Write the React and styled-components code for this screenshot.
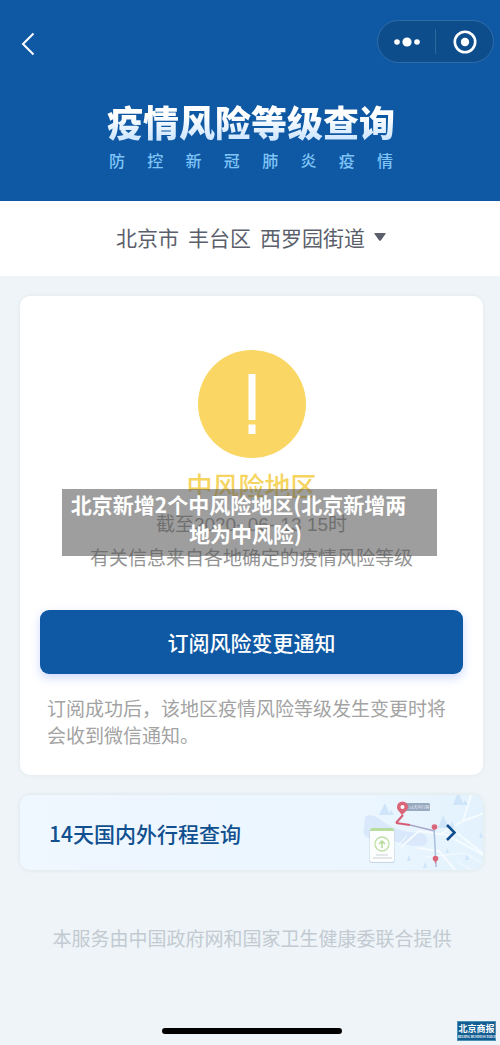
import React, { useState } from 'react'
import styled, { createGlobalStyle } from 'styled-components'

const subtitle = ['防', '控', '新', '冠', '肺', '炎', '疫', '情'];

function App() {

    const [subscribed, setSubscribed] = useState(false);
    const area = ['北京市', '丰台区', '西罗园街道'];

  return (
    <Page>
        <GlobalStyle />
        <Header>
            <NavBar>
                <BackButton aria-label="返回">
                    <svg width="14" height="24" viewBox="0 0 14 24" fill="none" stroke="#fff" strokeWidth="2">
                        <path d="M12.5 1.5 2 12l10.500 10.500" />
                    </svg>
                </BackButton>
                <Capsule>
                    <CapsuleButton aria-label="更多">
                        <svg width="26" height="10" viewBox="0 0 26 10" fill="#fff">
                            <circle cx="3" cy="5" r="2.800" />
                            <circle cx="13" cy="5" r="4.600" />
                            <circle cx="23" cy="5" r="2.800" />
                        </svg>
                    </CapsuleButton>
                    <Divider />
                    <CapsuleButton aria-label="关闭">
                        <svg width="24" height="24" viewBox="0 0 24 24">
                            <circle cx="12" cy="12" r="10.200" fill="none" stroke="#fff" strokeWidth="2.600" />
                            <circle cx="12" cy="12" r="4.200" fill="#fff" />
                        </svg>
                    </CapsuleButton>
                </Capsule>
            </NavBar>
            <Title>疫情风险等级查询</Title>
            <Subtitle>
                {subtitle.map((char)=>(
                    <span key={char}>{char}</span>
                ))}
            </Subtitle>
        </Header>

        <AreaButton>
            {area.map((part)=>(
                <span key={part}>{part}</span>
            ))}
            <svg width="12" height="8" viewBox="0 0 12 8" fill="#5b5f6b">
                <path d="M1 0h10q1.200 0 .5 1L7 7.200q-1 1-2 0L.5 1Q-.2 0 1 0z" />
            </svg>
        </AreaButton>

        <Content>
            <Card>
                <Result>
                    <svg width="108" height="108" viewBox="0 0 108 108">
                        <circle cx="54" cy="54" r="54" fill="#fad764" />
                        <path d="M50.500 24h7v46h-7zM50.500 74.500h7v9.500h-7z" fill="#fff" />
                    </svg>
                    <Level>中风险地区</Level>
                    <Detail>截至2020- 06- 13 15时</Detail>
                    <Detail>有关信息来自各地确定的疫情风险等级</Detail>
                    <Caption>
                        北京新增2个中风险地区(北京新增两<br />地为中风险)
                    </Caption>
                </Result>
                <SubscribeButton aria-pressed={subscribed} onClick={()=> setSubscribed(!subscribed)}>
                    订阅风险变更通知
                </SubscribeButton>
                <Hint>订阅成功后，该地区疫情风险等级发生变更时将会收到微信通知。</Hint>
            </Card>

            <TravelLink href="#travel">
                <TravelText>14天国内外行程查询</TravelText>
                <TravelMap />
            </TravelLink>
        </Content>

        <Footer>
            <p>本服务由中国政府网和国家卫生健康委联合提供</p>
            <BottomRow>
                <HomeBar />
                <Stamp>
                    北京商报
                    <small>BEIJING BUSINESS TODAY</small>
                </Stamp>
            </BottomRow>
        </Footer>
    </Page>
  )
}

function TravelMap() {
  return (
    <svg width="124" height="75" viewBox="-2 0 124 75" fill="none">
        {/* river and roads */}
        <path d="M4 22c5-4 12-1 17 4 12 9 24 11 38 12 9 1 10 13 1 13-17 1-29-8-43-7-12 1-16-4-14-11z" fill="#d9e8fb" />
        <g stroke="#f5fbff" strokeWidth="2">
            <path d="M40 52 58 36l28 4 38 21M56 53l22 3 16 19M78 40l24-14 22-8M102 26l8-26M86 30l38 30" />
            <path d="m38 50 8-10M96 66l14 9M64 62l40-4 20 12" strokeWidth="1" />
        </g>
        <g fill="#cfe5f9">
            <path d="m24 8 5 12H18zM30 15l3 5h-5zM97-3l6 13H92zM104 5l3 5h-6zM82 20l6 13H77zM91 26l3 7h-6z" />
            <path d="m48 60 2 6h-4zM64 67l2 6h-4zM106 59l2 6h-4zM86 53l2 5h-3zM120 37l2 6h-4z" />
        </g>
        {/* route */}
        <path d="m42 20-7 8" stroke="#d65c73" strokeWidth="2" />
        <path d="m35 28 14 2" stroke="#d65c73" strokeWidth="2" />
        <path d="m49 30 25 6" stroke="#a9a9ca" strokeWidth="1.500" />
        <path d="m73 32 2 40" stroke="#a9bddd" strokeWidth="1.500" />
        <rect x="42" y="8" width="27" height="8" rx="1.500" fill="#98a9bf" />
        <MapLabel x="48" y="14">14天内行程</MapLabel>
        <path d="M41 20c-3-4-5-5-5-8a5.500 5.500 0 0 1 11 0c0 3-3 5-6 8z" fill="#db6679" />
        <circle cx="41.500" cy="12" r="2" fill="#fff" />
        <circle cx="73.500" cy="32" r="2.800" fill="#db6679" />
        <circle cx="74.500" cy="63.500" r="2.800" fill="#db6679" />
        <path d="m73 65 1.500 4 1.500-4z" fill="#db6679" />
        {/* pass card */}
        <rect x="8.500" y="34" width="25" height="34" rx="2" fill="#c5d5e5" />
        <rect x="9" y="33" width="24" height="34" rx="2" fill="#fcfefd" />
        <path d="M9 36v-1q0-2 2-2h20q2 0 2 2v1z" fill="#b9dda0" />
        <circle cx="21" cy="49" r="7" stroke="#c0dfa5" strokeWidth="1.300" />
        <path d="M21 53v-7m-3 3 3-3 3 3" stroke="#b4d997" strokeWidth="1.500" />
        <path d="M15 60h12M12 63h19" stroke="#cbd0d5" />
        <path d="m86 30 7.500 7.500L86 45" stroke="#10508f" strokeWidth="2.600" />
    </svg>
  )
}

const GlobalStyle = createGlobalStyle`
    *{
        box-sizing: border-box;
    }
    body{
        margin: 0;
        background: #eef4f7;
        font-family: "Noto Sans CJK SC", sans-serif;
    }
    button{
        font-family: inherit;
        border: none;
        padding: 0;
        cursor: pointer;
    }
    h1, h2, p{
        margin: 0;
    }
    svg{
        flex-shrink: 0;
    }
`;

const Page = styled.main`
    display: flex;
    flex-direction: column;
    min-height: 100vh;
`;

const Header = styled.header`
    display: flex;
    flex-direction: column;
    align-items: center;
    padding: 20px 6px 31px 21px;
    background: #0f59a4;
`;

const NavBar = styled.nav`
    display: flex;
    align-items: center;
    justify-content: space-between;
    align-self: stretch;
`;

const BackButton = styled.button`
    display: flex;
    padding: 4px 0 0;
    background: none;
`;

const Capsule = styled.div`
    display: flex;
    align-items: center;
    width: 117px;
    height: 43px;
    border: 1px solid #2f6dab;
    border-radius: 22px;
    background: #0d4d8b;
`;

const CapsuleButton = styled.button`
    display: flex;
    flex: 1;
    align-items: center;
    justify-content: center;
    height: 100%;
    background: none;
`;

const Divider = styled.span`
    width: 1px;
    height: 25px;
    background: #2f679f;
`;

const Title = styled.h1`
    margin: 32px 13px 0 0;
    font-size: 36px;
    font-weight: 900;
    line-height: 52px;
    color: transparent;
    background: linear-gradient(#fff 40%, #c4e1ff 95%);
    background-clip: text;
`;

const Subtitle = styled.p`
    display: flex;
    justify-content: space-between;
    width: 284px;
    margin: 3px 13px 0 0;
    font-size: 16px;
    font-weight: 500;
    line-height: 20px;
    color: #7fc4f7;
`;

const AreaButton = styled.button`
    display: flex;
    align-items: center;
    justify-content: center;
    gap: 9px;
    height: 75px;
    padding: 0 0 3px 2px;
    background: #fff;
    color: #5b5f6b;
    font-size: 21px;
`;

const Content = styled.div`
    display: flex;
    flex-direction: column;
    gap: 20px;
    padding: 20px 17px 0 20px;
`;

const Card = styled.section`
    padding: 54px 20px 27px;
    border-radius: 10px;
    background: #fff;
    box-shadow: 0 0 4px rgba(60, 90, 120, 0.08);
`;

const Result = styled.div`
    position: relative;
    display: flex;
    flex-direction: column;
    align-items: center;
`;

const Level = styled.h2`
    margin: 10px 0 3px;
    font-size: 26px;
    font-weight: 500;
    line-height: 34px;
    color: #f5d45f;
`;

const Detail = styled.p`
    padding-top: 6px;
    font-family: "Liberation Sans", "Noto Sans CJK SC", sans-serif;
    font-size: 19px;
    line-height: 28px;
    color: #929292;
`;

const Caption = styled.p`
    position: absolute;
    top: 139px;
    left: 22px;
    right: 26px;
    padding: 1px 8px 8px 0;
    background: rgba(88, 88, 88, 0.58);
    color: #fff;
    font-size: 21px;
    font-weight: 700;
    line-height: 29px;
    text-align: center;
    text-indent: -14px;
    white-space: nowrap;
`;

const SubscribeButton = styled.button`
    display: block;
    width: 100%;
    height: 64px;
    margin-top: 37px;
    border-radius: 9px;
    background: #0f59a4;
    box-shadow: 0 4px 10px rgba(60, 110, 255, 0.25);
    color: #fff;
    font-size: 21px;
    font-weight: 500;
`;

const Hint = styled.p`
    margin-top: 20px;
    padding-left: 7px;
    font-size: 19px;
    line-height: 27px;
    color: #a3a3a3;
`;

const TravelLink = styled.a`
    display: flex;
    align-items: center;
    justify-content: space-between;
    padding-left: 29px;
    overflow: hidden;
    border-radius: 10px;
    background: linear-gradient(90deg, #eff7ff, #ebf6ff 75%, #e3f2fd);
    box-shadow: 0 0 4px rgba(60, 90, 120, 0.1);
    text-decoration: none;
`;

const TravelText = styled.span`
    font-size: 21px;
    font-weight: 500;
    color: #10508f;
`;

const MapLabel = styled.text`
    font-size: 4px;
    fill: #e8eef5;
`;

const Footer = styled.footer`
    display: flex;
    flex: 1;
    flex-direction: column;
    justify-content: space-between;
    padding: 54px 0 0 4px;
    text-align: center;
    font-size: 19px;
    line-height: 28px;
    color: #c2cad2;
`;

const BottomRow = styled.div`
    display: grid;
    grid-template-columns: 1fr 180px 1fr;
    align-items: center;
    padding: 0 4px 4px;
`;

const HomeBar = styled.div`
    grid-column: 2;
    height: 6px;
    border-radius: 3px;
    background: #000;
`;

const Stamp = styled.div`
    justify-self: end;
    width: 39px;
    height: 20px;
    padding-top: 2px;
    border: 1px solid #4b8fb5;
    background: #125e92;
    color: #fff;
    font-family: "Liberation Serif", "Noto Sans CJK SC", serif;
    font-size: 9px;
    font-weight: 700;
    line-height: 11px;
    white-space: nowrap;

    small{
        display: block;
        font-size: 3px;
        line-height: 4px;
    }
`;

export default App
